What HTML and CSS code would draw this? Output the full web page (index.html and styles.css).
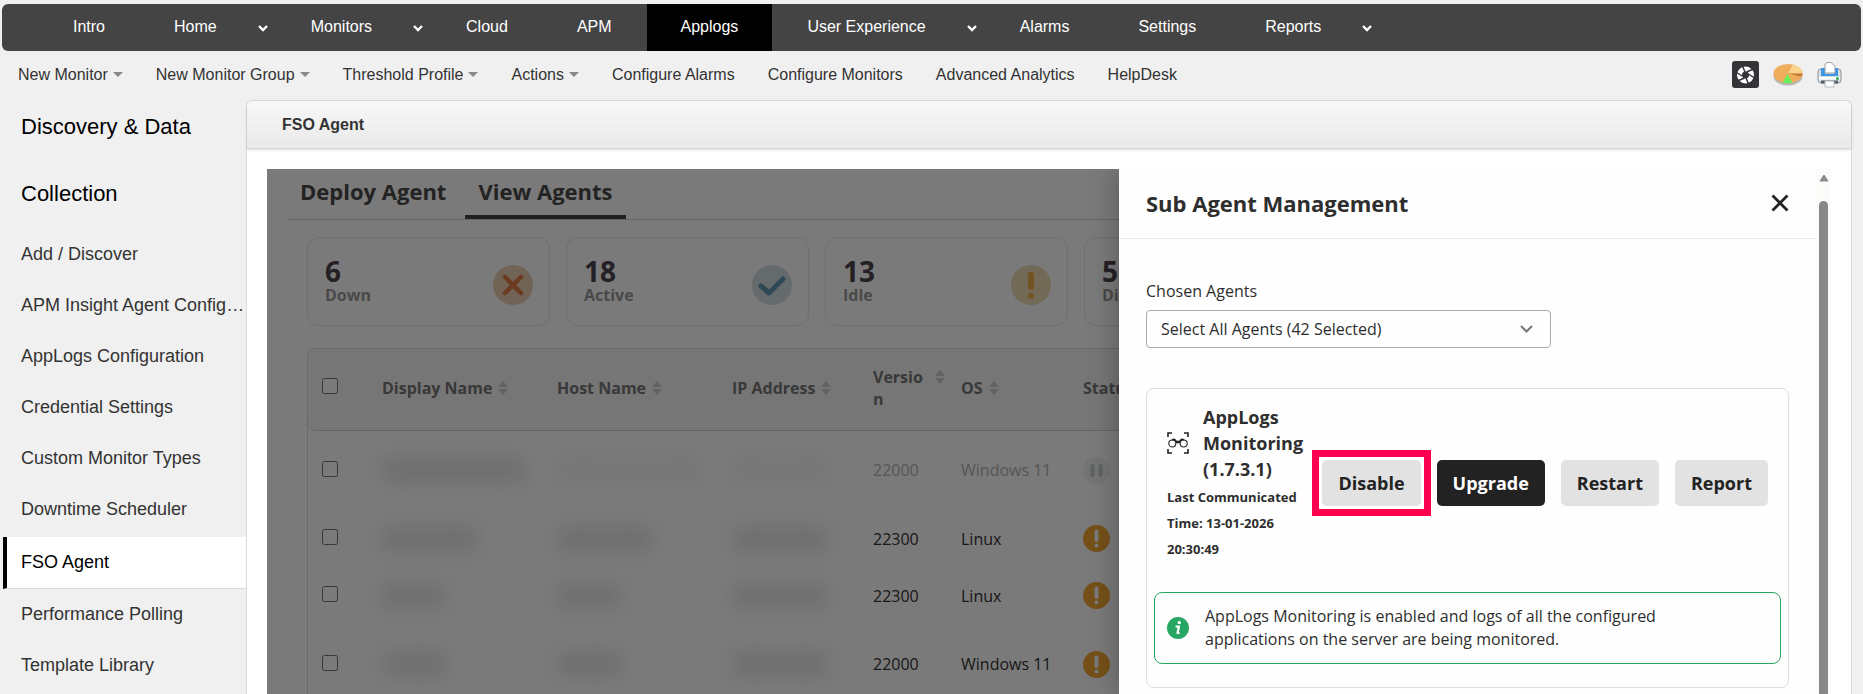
FILE: index.html
```html
<!DOCTYPE html>
<html lang="en">
	<head>
		<meta charset="UTF-8" />
		<meta name="viewport" content="width=device-width, initial-scale=1.0" />
		<title>FSO Agent</title>
		<link rel="stylesheet" href="styles.css">
	</head>
	<body>
		<!-- Shared icons -->
		<svg class="sprite" aria-hidden="true">
			<symbol id="i-chevron" viewBox="0 0 10 7"><path d="M1 1l4 4 4-4" fill="none" stroke="currentColor" stroke-width="2.4" /></symbol>
			<symbol id="i-sort" viewBox="0 0 10 14"><path d="M5 0l5 6H0zM5 14l5-6H0z" fill="currentColor" /></symbol>
			<symbol id="i-idle" viewBox="0 0 27 27">
				<circle cx="13.5" cy="13.5" r="13.5" fill="#f5aa35" />
				<path d="M13.5 6.500v8.500" stroke="#fff" stroke-width="4" stroke-linecap="round" />
				<circle cx="13.500" cy="20.500" r="2" fill="#fff" />
			</symbol>
		</svg>

		<nav class="main-nav">
			<a href="#">Intro</a>
			<a href="#" class="has-menu">Home<svg><use href="#i-chevron" /></svg></a>
			<a href="#" class="has-menu">Monitors<svg><use href="#i-chevron" /></svg></a>
			<a href="#">Cloud</a>
			<a href="#">APM</a>
			<a href="#" class="active">Applogs</a>
			<a href="#" class="has-menu">User Experience<svg><use href="#i-chevron" /></svg></a>
			<a href="#">Alarms</a>
			<a href="#">Settings</a>
			<a href="#" class="has-menu">Reports<svg><use href="#i-chevron" /></svg></a>
		</nav>

		<div class="sub-nav">
			<a href="#" class="caret">New Monitor</a>
			<a href="#" class="caret">New Monitor Group</a>
			<a href="#" class="caret">Threshold Profile</a>
			<a href="#" class="caret">Actions</a>
			<a href="#">Configure Alarms</a>
			<a href="#">Configure Monitors</a>
			<a href="#">Advanced Analytics</a>
			<a href="#">HelpDesk</a>
			<div class="tools">
				<a href="#" aria-label="Snapshot">
					<svg width="27" height="27" viewBox="0 0 27 27">
						<rect width="27" height="27" rx="3" fill="#333338" />
						<circle cx="13.500" cy="14" r="6" fill="none" stroke="#fff" stroke-width="5" />
						<path d="M10 4l3 7M21.500 8l-7 3M22.500 17l-6-4M17 24l-3-7M5.500 20l7-3M4 11l6 4" stroke="#333338" stroke-width="1.500" />
					</svg>
				</a>
				<a href="#" aria-label="Charts">
					<svg width="30" height="24" viewBox="0 0 30 24">
						<ellipse cx="15" cy="13" rx="14.500" ry="9.500" fill="#b9b6b0" />
						<ellipse cx="15" cy="10.500" rx="14.500" ry="9.500" fill="#f0ad5c" />
						<path d="M15 10.500L20 1.500Q29 4 29.500 10.500z" fill="#fbd48d" />
						<path d="M15 10.500h14.500q0 2-2 3z" fill="#c17a35" />
						<path d="M14.500 11l5 9h-10z" fill="#66f05a" />
					</svg>
				</a>
				<a href="#" aria-label="Print">
					<svg width="25" height="26" viewBox="0 0 25 26">
						<rect x="1" y="7" width="23" height="14" rx="3" fill="#d9dee3" stroke="#8d959b" />
						<path d="M4 6h4v6h9V6h4v8H4z" fill="#3d97e4" />
						<path d="M8 11V2l2-1.500h4L18 4v7z" fill="#fff" stroke="#9aa2a8" />
						<path d="M2 15h21v2.500H2z" fill="#fff" />
						<path d="M4 18.500h17v3H4z" fill="#575e64" />
						<path d="M8 19h9v6H8z" fill="#fff" stroke="#b5babd" />
						<circle cx="20.500" cy="16.500" r="1.500" fill="#2da75b" />
					</svg>
				</a>
			</div>
		</div>

		<div class="layout">
			<aside class="sidebar">
				<h2>Discovery &amp; Data Collection</h2>
				<a href="#">Add / Discover</a>
				<a href="#">APM Insight Agent Configuration</a>
				<a href="#">AppLogs Configuration</a>
				<a href="#">Credential Settings</a>
				<a href="#">Custom Monitor Types</a>
				<a href="#">Downtime Scheduler</a>
				<a href="#" class="active">FSO Agent</a>
				<a href="#">Performance Polling</a>
				<a href="#">Template Library</a>
			</aside>

			<main class="panel">
				<h1 class="panel-header">FSO Agent</h1>
				<div class="frame">
					<div class="content">
						<div class="tabs">
							<button>Deploy Agent</button>
							<button class="active">View Agents</button>
						</div>

						<div class="cards">
							<div class="card">
								<div><strong>6</strong><span>Down</span></div>
								<svg width="40" height="40" viewBox="0 0 40 40">
									<circle cx="20" cy="20" r="20" fill="#eed0b6" />
									<path d="M12 12l16 16M28 12L12 28" stroke="#dd7a45" stroke-width="4.500" stroke-linecap="round" />
								</svg>
							</div>
							<div class="card">
								<div><strong>18</strong><span>Active</span></div>
								<svg width="40" height="40" viewBox="0 0 40 40">
									<circle cx="20" cy="20" r="20" fill="#d3dfe2" />
									<path d="M9 21l8 7 14-14" fill="none" stroke="#6098b3" stroke-width="5" stroke-linecap="round" stroke-linejoin="round" />
								</svg>
							</div>
							<div class="card">
								<div><strong>13</strong><span>Idle</span></div>
								<svg width="40" height="40" viewBox="0 0 40 40">
									<circle cx="20" cy="20" r="20" fill="#efdcb4" />
									<path d="M20 10v12" stroke="#f0ad45" stroke-width="6" stroke-linecap="round" />
									<circle cx="20" cy="31" r="3" fill="#f0ad45" />
								</svg>
							</div>
							<div class="card">
								<div><strong>5</strong><span>Disabled</span></div>
							</div>
						</div>

						<div class="table-wrap">
							<table>
								<colgroup>
									<col class="c-check"><col class="c-name"><col class="c-name"><col class="c-ip"><col class="c-version"><col class="c-os"><col>
								</colgroup>
								<thead>
									<tr>
										<th><input type="checkbox" aria-label="Select all agents"></th>
										<th><div>Display Name<svg><use href="#i-sort" /></svg></div></th>
										<th><div>Host Name<svg><use href="#i-sort" /></svg></div></th>
										<th><div>IP Address<svg><use href="#i-sort" /></svg></div></th>
										<th class="version"><div><span>Version</span><svg><use href="#i-sort" /></svg></div></th>
										<th><div>OS<svg><use href="#i-sort" /></svg></div></th>
										<th><div>Status</div></th>
									</tr>
								</thead>
								<tbody>
									<tr class="tall muted">
										<td><input type="checkbox" aria-label="Select agent 1"></td>
										<td><i class="redacted wide"></i></td>
										<td><i class="redacted faint wide"></i></td>
										<td><i class="redacted faint"></i></td>
										<td>22000</td>
										<td>Windows 11</td>
										<td>
											<svg width="27" height="27" viewBox="0 0 27 27">
												<circle cx="13.500" cy="13.500" r="13.500" fill="#f2f3f4" />
												<path d="M9.500 9v9M17.500 9v9" stroke="#c3cdd4" stroke-width="4" stroke-linecap="round" />
											</svg>
										</td>
									</tr>
									<tr>
										<td><input type="checkbox" aria-label="Select agent 2"></td>
										<td><i class="redacted"></i></td>
										<td><i class="redacted"></i></td>
										<td><i class="redacted"></i></td>
										<td>22300</td>
										<td>Linux</td>
										<td><svg width="27" height="27"><use href="#i-idle" /></svg></td>
									</tr>
									<tr>
										<td><input type="checkbox" aria-label="Select agent 3"></td>
										<td><i class="redacted short"></i></td>
										<td><i class="redacted short"></i></td>
										<td><i class="redacted"></i></td>
										<td>22300</td>
										<td>Linux</td>
										<td><svg width="27" height="27"><use href="#i-idle" /></svg></td>
									</tr>
									<tr class="tall">
										<td><input type="checkbox" aria-label="Select agent 4"></td>
										<td><i class="redacted short"></i></td>
										<td><i class="redacted short"></i></td>
										<td><i class="redacted"></i></td>
										<td>22000</td>
										<td>Windows 11</td>
										<td><svg width="27" height="27"><use href="#i-idle" /></svg></td>
									</tr>
								</tbody>
							</table>
						</div>
					</div>
					<div class="overlay"></div>

					<section class="drawer">
						<div class="drawer-main">
							<header>
								<h2>Sub Agent Management</h2>
								<button class="close" aria-label="Close">
									<svg width="18" height="18" viewBox="0 0 18 18"><path d="M1.500 1.500l15 15M16.500 1.500l-15 15" stroke="#222" stroke-width="2.800" /></svg>
								</button>
							</header>
							<div class="drawer-body">
								<label for="agents">Chosen Agents</label>
								<div class="select">
									<select id="agents">
										<option>Select All Agents (42 Selected)</option>
									</select>
									<svg width="13" height="8" viewBox="0 0 13 8"><path d="M1 1l5.500 5.500L12 1" fill="none" stroke="#777" stroke-width="2" /></svg>
								</div>

								<div class="agent-card">
									<div class="agent-row">
										<div class="agent-info">
											<div class="agent-title">
												<svg width="22" height="22" viewBox="0 0 22 22" fill="none" stroke="#222">
													<path d="M1 5V1h4M17 1h4v4M21 17v4h-4M5 21H1v-4" stroke-width="1.600" />
													<circle cx="5.300" cy="11.500" r="3.500" stroke-width="1.100" />
													<circle cx="16.700" cy="11.500" r="3.500" stroke-width="1.100" />
													<path d="M5 7.800l2.500-.500 2 2.200h3l2-2.200 2.500.500M9 10.500h4" stroke-width="1.500" />
												</svg>
												<h3>AppLogs Monitoring (1.7.3.1)</h3>
											</div>
											<p>Last Communicated Time: 13-01-2026 20:30:49</p>
										</div>
										<div class="actions">
											<div class="highlight"><button>Disable</button></div>
											<button class="btn-dark">Upgrade</button>
											<button>Restart</button>
											<button>Report</button>
										</div>
									</div>
									<div class="notice">
										<svg width="22" height="22" viewBox="0 0 22 22">
											<circle cx="11" cy="11" r="11" fill="#27a763" />
											<circle cx="12.300" cy="5.600" r="1.700" fill="#fff" />
											<path d="M8.500 9.500h3.500l-1.500 6.500h2" fill="none" stroke="#fff" stroke-width="2.200" stroke-linejoin="round" />
										</svg>
										<p>AppLogs Monitoring is enabled and logs of all the configured applications on the server are being monitored.</p>
									</div>
								</div>
							</div>
						</div>
						<div class="scrollbar">
							<svg width="10" height="8" viewBox="0 0 10 8"><path d="M5 1L9 7H1z" fill="#8a8a8a" stroke="#8a8a8a" stroke-linejoin="round" /></svg>
							<div class="thumb"></div>
						</div>
					</section>
				</div>
			</main>
		</div>
	</body>
</html>
```
FILE: styles.css
```css
:root {
	--ui: 'Liberation Sans', Arial, sans-serif;
	--app: 'Open Sans', 'Noto Sans', sans-serif;
	--text: #333;
	--line: #dcdcdc;
	--page: #f0f0f0;
}

* {
	box-sizing: border-box;
}

body {
	display: flex;
	flex-direction: column;
	height: 100vh;
	margin: 0;
	overflow: hidden;
	font-family: var(--ui);
	font-size: 16px;
	color: var(--text);
	background: var(--page);
}

h1,
h2,
h3,
p {
	margin: 0;
}

a {
	color: inherit;
	text-decoration: none;
}

button {
	font-family: inherit;
	color: inherit;
	border: none;
	background: none;
	cursor: pointer;
}

.sprite {
	display: none;
}

/* Top navigation */
.main-nav {
	display: flex;
	flex: none;
	gap: 1px;
	height: 47px;
	margin: 4px 2px 0;
	padding-left: 37px;
	border-radius: 6px;
	background: #444;
	color: #fff;
}

.main-nav a {
	display: flex;
	align-items: center;
	padding: 0 34px 2px;
}

.main-nav .active {
	background: #000;
}

.main-nav .has-menu {
	padding-right: 8px;
}

.main-nav svg {
	width: 10px;
	height: 7px;
	margin: 3px 0 0 41px;
}

.sub-nav {
	display: flex;
	flex: none;
	align-items: center;
	gap: 33px;
	height: 49px;
	padding: 0 21px 2px 18px;
}

.sub-nav .caret::after {
	content: '';
	display: inline-block;
	margin-left: 5px;
	border: 5px solid transparent;
	border-top-color: #888;
	border-bottom: 0;
	vertical-align: 3px;
}

.tools {
	display: flex;
	align-items: center;
	gap: 14px;
	margin-left: auto;
}

.tools svg {
	display: block;
}

.layout {
	display: flex;
	flex: 1;
	min-height: 0;
}

/* Left menu */
.sidebar {
	flex: none;
	width: 246px;
}

.sidebar h2 {
	padding: 0 32px 0 21px;
	margin: -7px 0 2px;
	font-size: 22px;
	font-weight: normal;
	line-height: 67px;
	color: #000;
}

.sidebar a {
	display: block;
	margin-left: 3px;
	padding-left: 18px;
	font-size: 18px;
	line-height: 51px;
	white-space: nowrap;
	overflow: hidden;
	text-overflow: ellipsis;
}

.sidebar .active {
	margin-top: 2px;
	padding-left: 14px;
	border-left: 4px solid #000;
	border-bottom: 1px solid var(--line);
	background: #fff;
	color: #000;
}

/* Main panel */
.panel {
	display: flex;
	flex: 1;
	flex-direction: column;
	min-width: 0;
	margin-right: 11px;
	border: 1px solid var(--line);
	border-bottom: 0;
	border-radius: 6px 6px 0 0;
	background: #fff;
}

.panel-header {
	padding: 0 35px;
	border-bottom: 1px solid #d6d6d6;
	border-radius: 6px 6px 0 0;
	box-shadow: 0 1px 3px rgba(0, 0, 0, 0.15);
	background: linear-gradient(#f8f8f8, #e9e9e9);
	font-size: 16px;
	line-height: 47px;
}

.frame {
	position: relative;
	flex: 1;
	min-height: 0;
	margin: 20px 20px 0;
	overflow: hidden;
	font-family: var(--app);
}

.content {
	padding: 0 40px;
}

.overlay {
	position: absolute;
	inset: 0;
	background: rgba(0, 0, 0, 0.52);
}

.tabs {
	display: flex;
	gap: 6px;
	height: 51px;
	margin: 0 -20px 17px;
	border-bottom: 1px solid #d4d4d4;
}

.tabs button {
	padding: 0 13px 6px;
	font-size: 22px;
	font-weight: 700;
	color: #4a4a4a;
}

.tabs .active {
	padding-bottom: 2px;
	border-bottom: 4px solid #444;
}

.cards {
	display: flex;
	gap: 16px;
	margin-bottom: 22px;
}

.card {
	display: flex;
	flex: none;
	align-items: center;
	justify-content: space-between;
	width: 243px;
	height: 89px;
	padding: 6px 16px 0 17px;
	border: 1px solid #e9e9e9;
	border-radius: 12px;
}

.card div {
	padding-bottom: 8px;
}

.card strong,
.card span {
	display: block;
}

.card strong {
	font-size: 28px;
	line-height: 28px;
	color: #4c434c;
}

.card span {
	font-weight: 700;
	line-height: 20px;
	color: #999;
}

.table-wrap {
	border: 1px solid #dcdcdc;
	border-radius: 8px;
}

table {
	width: 100%;
	table-layout: fixed;
	border-collapse: separate;
	border-spacing: 0;
}

.c-check {
	width: 58px;
}

.c-name {
	width: 175px;
}

.c-ip {
	width: 141px;
}

.c-version {
	width: 88px;
}

.c-os {
	width: 122px;
}

th {
	height: 82px;
	padding: 0 0 4px 16px;
	border-bottom: 1px solid #d0d0d0;
	background: #f6f6f6;
	text-align: left;
	font-weight: 700;
	line-height: 22px;
	color: #777;
}

th:first-child {
	border-radius: 8px 0 0 8px;
}

th div {
	display: flex;
	align-items: center;
	gap: 6px;
}

th svg {
	flex: none;
	width: 10px;
	height: 14px;
	color: #cdcdcd;
}

.version div {
	align-items: flex-start;
	gap: 8px;
}

.version span {
	width: 54px;
	word-break: break-all;
}

.version svg {
	margin-top: 4px;
}

th:first-child,
td:first-child {
	padding-left: 14px;
}

td {
	height: 57px;
	padding: 0 0 2px 16px;
}

.tall td {
	height: 80px;
}

.muted td {
	color: #b4b4b4;
}

td svg {
	display: block;
}

input {
	display: block;
	width: 16px;
	height: 16px;
	margin: 0 0 3px;
}

.redacted {
	display: block;
	width: 96px;
	height: 24px;
	border-radius: 8px;
	background: #e6e6e6;
	filter: blur(10px);
}

.redacted.wide {
	width: 144px;
}

.redacted.short {
	width: 64px;
}

.redacted.faint {
	background: #f5f5f5;
}

/* Sub agent drawer */
.drawer {
	position: absolute;
	top: 0;
	right: 0;
	bottom: 0;
	display: flex;
	width: 712px;
	background: #fefefe;
	box-shadow: 0 0 28px rgba(0, 0, 0, 0.3);
	color: #2e2e2e;
}

.drawer-main {
	flex: 1;
}

.drawer header {
	display: flex;
	align-items: center;
	justify-content: space-between;
	height: 70px;
	padding: 0 27px 1px;
	border-bottom: 1px solid #ececec;
}

.drawer h2 {
	font-size: 22px;
	font-weight: 700;
}

.close {
	display: flex;
	padding: 0;
}

.drawer-body {
	padding: 40px 27px 0;
}

.drawer-body label {
	display: block;
	line-height: 24px;
	margin-bottom: 7px;
}

.select {
	position: relative;
	width: 405px;
	margin-bottom: 40px;
}

.select select {
	display: block;
	width: 100%;
	height: 38px;
	padding: 0 14px;
	appearance: none;
	border: 1px solid #aaa;
	border-radius: 4px;
	background: transparent;
	font: inherit;
	color: inherit;
}

.select svg {
	position: absolute;
	top: 15px;
	right: 18px;
	pointer-events: none;
}

.agent-card {
	padding: 15px 7px 23px;
	border: 1px solid var(--line);
	border-radius: 8px;
}

.agent-row {
	display: flex;
	align-items: center;
	justify-content: space-between;
	padding: 0 13px;
}

.agent-info {
	flex: none;
	width: 141px;
}

.agent-title {
	display: flex;
	align-items: center;
	gap: 14px;
}

.agent-title svg {
	flex: none;
}

.agent-title h3 {
	font-size: 18px;
	font-weight: 700;
	line-height: 26px;
}

.agent-info p {
	margin-top: 2px;
	font-size: 13px;
	font-weight: 700;
	line-height: 26px;
}

.actions {
	display: flex;
	gap: 16px;
}

.actions button {
	height: 46px;
	padding: 0 16px;
	border-radius: 5px;
	background: #e2e2e2;
	font-size: 18px;
	font-weight: 700;
	color: #222;
}

.actions .btn-dark {
	background: #222;
	color: #fff;
}

.highlight {
	outline: 7px solid #ff0050;
	outline-offset: 3px;
}

.notice {
	display: flex;
	align-items: center;
	gap: 16px;
	margin-top: 30px;
	padding: 12px;
	border: 1px solid #27a763;
	border-radius: 8px;
}

.notice svg {
	flex: none;
}

.notice p {
	max-width: 500px;
	line-height: 23px;
}

.scrollbar {
	display: flex;
	flex: none;
	flex-direction: column;
	align-items: center;
	gap: 19px;
	width: 15px;
	padding-top: 5px;
	background: #fbfbf9;
}

.thumb {
	flex: 1;
	width: 9px;
	border-radius: 5px 5px 0 0;
	background: #888;
}
```
